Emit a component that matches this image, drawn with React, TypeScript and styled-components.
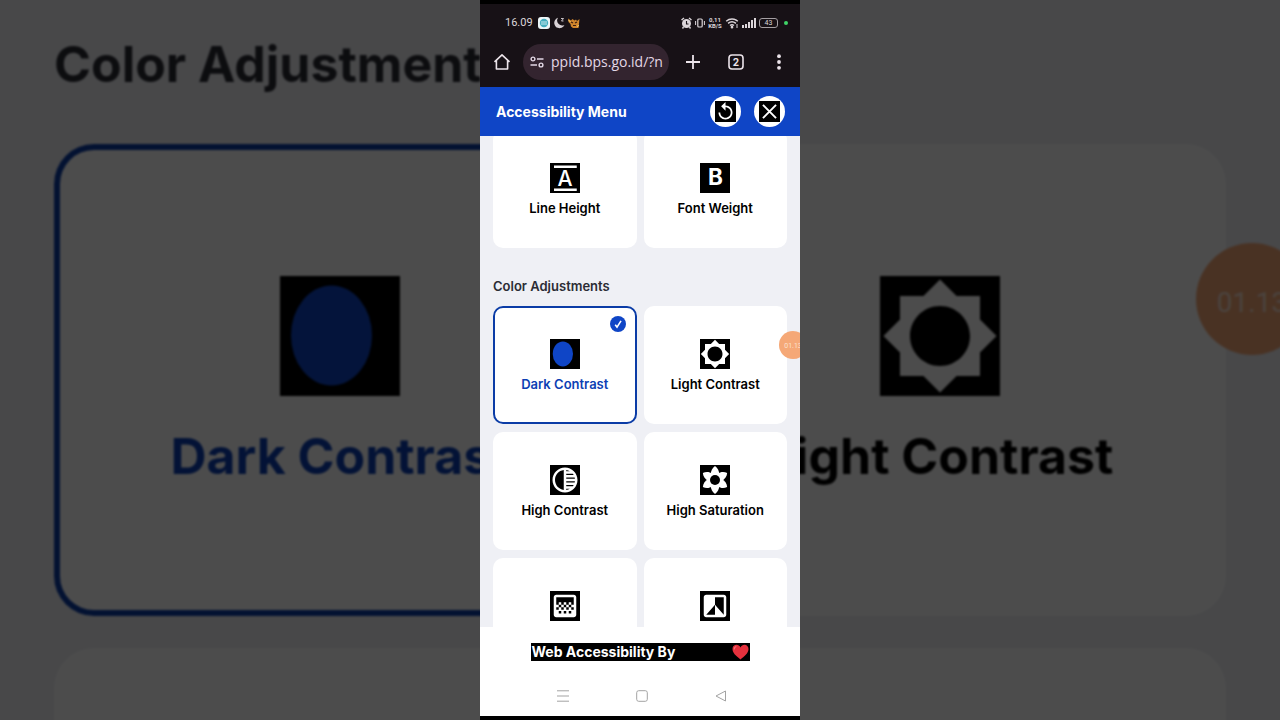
import React from "react";
import styled, { createGlobalStyle } from "styled-components";

const BLUE = "#0f45c6";

const GlobalStyle = createGlobalStyle`
  *, *::before, *::after { box-sizing: border-box; }
  body { margin: 0; background: #000; font-family: Inter, "Liberation Sans", sans-serif; }
  button, input { font: inherit; color: inherit; border: 0; padding: 0; margin: 0; background: none; }
  svg { display: block; }
`;

const Stage = styled.div`
  display: grid;
  grid-template-columns: minmax(0, 1fr);
  grid-template-rows: 100vh;
  justify-items: center;
  overflow: hidden;
`;

const Backdrop = styled.div`
  grid-area: 1 / 1;
  justify-self: stretch;
  overflow: hidden;
  background: #f0f1f5;
  opacity: 0.3;
`;

const BackdropContent = styled.div`
  position: relative;
  padding: 24px 54px 0;
  filter: blur(1px);
`;

const Phone = styled.div`
  grid-area: 1 / 1;
  width: 320px;
  height: 100%;
  display: flex;
  flex-direction: column;
  position: relative;
  overflow: hidden;
  border: solid #000;
  border-width: 4px 0;
  background: #fff;
`;

const StatusBar = styled.div`
  flex: none;
  height: 36px;
  display: flex;
  align-items: center;
  justify-content: space-between;
  padding: 2px 12px 0 25px;
  background: #171116;
  color: #dcd6da;
`;

const StatusGroup = styled.div<{ $gap: number }>`
  display: flex;
  align-items: center;
  gap: ${(p) => p.$gap}px;
`;

const Clock = styled.time`
  margin-right: 2px;
  font: 400 11px/16px Roboto, sans-serif;
`;

const NetSpeed = styled.span`
  font: 700 6px/6px Roboto, sans-serif;
  text-align: center;
  width: 14px;
`;

const BatteryBox = styled.span`
  width: 19px;
  height: 10px;
  border: 1px solid #a59fa3;
  border-radius: 3px;
  font: 400 7px/8px Roboto, sans-serif;
  text-align: center;
`;

const LiveDot = styled.span`
  width: 4px;
  height: 4px;
  border-radius: 50%;
  background: #3fd467;
  margin-left: 3px;
`;

const BrowserBar = styled.div`
  flex: none;
  height: 47px;
  display: flex;
  align-items: flex-start;
  padding-top: 4px;
  background: #171116;
  color: #ece4ea;
`;

const BarButton = styled.button`
  flex: none;
  width: 43px;
  height: 36px;
  display: grid;
  place-items: center;
`;

const AddressPill = styled.label`
  flex: 1;
  min-width: 0;
  height: 36px;
  display: flex;
  align-items: center;
  gap: 7px;
  margin-right: 2px;
  padding: 0 5px 0 7px;
  border-radius: 18px;
  background: #33242f;
`;

const AddressInput = styled.input`
  flex: 1;
  min-width: 0;
  height: 24px;
  outline: 0;
  font: 400 14px/24px "Open Sans", sans-serif;
  color: #e3d8e6;
`;

const MenuHeader = styled.header`
  flex: none;
  height: 49px;
  display: flex;
  align-items: center;
  gap: 13px;
  padding: 0 15px 0 16px;
  background: ${BLUE};
  color: #fff;
`;

const MenuTitle = styled.h1`
  flex: 1;
  margin: 0;
  font-size: 14px;
  line-height: 20px;
  font-weight: 700;
`;

const RoundButton = styled.button`
  width: 31px;
  height: 31px;
  border-radius: 50%;
  display: grid;
  place-items: center;
  background: #fff;
  svg { width: 21px; height: 21px; background: #000; color: #fff; }
`;

const MenuBody = styled.main`
  flex: 1;
  min-height: 0;
  overflow: hidden;
  padding: 0 13px;
  background: #eff0f5;
`;

const TopSection = styled.section`
  margin-top: -6px;
`;

const SectionTitle = styled.h2<{ $unit: number }>`
  margin: ${(p) => (p.$unit === 1 ? 28 : 0)}px 0 ${(p) => p.$unit * 10}px;
  font-size: ${(p) => (p.$unit === 1 ? 13 : 50)}px;
  line-height: ${(p) => p.$unit * 20}px;
  font-weight: ${(p) => (p.$unit === 1 ? 600 : 700)};
  color: #2b2c34;
`;

const TileGrid = styled.div<{ $unit: number }>`
  display: grid;
  grid-template-columns: repeat(2, minmax(0, 1fr));
  gap: ${(p) => p.$unit * 8}px ${(p) => p.$unit * 7}px;
`;

const TileBox = styled.button<{ $unit: number; $on?: boolean }>`
  position: relative;
  height: ${(p) => p.$unit * 118}px;
  display: flex;
  flex-direction: column;
  align-items: center;
  gap: ${(p) => p.$unit * 7}px;
  padding-top: ${(p) => p.$unit * 33}px;
  border-radius: ${(p) => p.$unit * 10}px;
  background: #fff;
  color: ${(p) => (p.$on ? "#0c3fb4" : "#000")};
  box-shadow: ${(p) => (p.$on ? `inset 0 0 0 ${p.$unit === 1 ? 2 : 6}px #0b3ca6` : "none")};
  svg { flex: none; width: ${(p) => p.$unit * 30}px; height: ${(p) => p.$unit * 30}px; }
`;

const TileLabel = styled.span<{ $unit: number }>`
  font-size: ${(p) => (p.$unit === 1 ? 13 : 50)}px;
  line-height: ${(p) => p.$unit * 16}px;
  font-weight: ${(p) => (p.$unit === 1 ? 600 : 700)};
  white-space: nowrap;
`;

const CheckBadge = styled.span`
  position: absolute;
  top: 10px;
  right: 11px;
  width: 16px;
  height: 16px;
  border-radius: 50%;
  display: grid;
  place-items: center;
  background: ${BLUE};
  && svg { width: 16px; height: 16px; }
`;

const TimerBubble = styled.div<{ $unit: number }>`
  position: absolute;
  top: ${(p) => (p.$unit === 1 ? 327 : 243)}px;
  right: ${(p) => p.$unit * -7}px;
  width: ${(p) => p.$unit * 28}px;
  height: ${(p) => p.$unit * 28}px;
  border-radius: 50%;
  background: #f5a877;
  color: #fbe0cf;
  font: 400 ${(p) => p.$unit * 7}px/${(p) => p.$unit * 30}px Roboto, sans-serif;
  text-align: center;
`;

const Credit = styled.footer`
  flex: none;
  height: 50px;
  display: flex;
  align-items: center;
  justify-content: center;
  background: #fff;
`;

const CreditLink = styled.a`
  width: 219px;
  height: 18px;
  display: flex;
  align-items: center;
  justify-content: space-between;
  padding: 0 1px;
  background: #000;
  color: #fff;
  text-decoration: none;
  font-size: 14px;
  line-height: 18px;
  font-weight: 700;
`;

const SystemNav = styled.nav`
  flex: none;
  height: 39px;
  display: grid;
  grid-template-columns: repeat(3, 1fr);
  padding: 0 40px 1px 43px;
  color: #a3a3a3;
  button { display: grid; place-items: center; }
`;

type IconName = "line" | "bold" | "moon" | "sun" | "tone" | "flower" | "gradient" | "bw";

const shapes: Record<IconName, React.ReactNode> = {
  line: (
    <>
      <path d="M3.200 1.900h18.200V4H3.200zM3.200 20.300h18.200v2.100H3.200z" />
      <text x="12" y="18" fontSize="17" fontWeight="500" textAnchor="middle">A</text>
    </>
  ),
  bold: <text x="12.400" y="17.800" fontSize="18" fontWeight="700" textAnchor="middle">B</text>,
  moon: <ellipse cx="10.300" cy="11.900" rx="8.100" ry="10" fill={BLUE} />,
  sun: <path d="M20 15.31L23.31 12 20 8.69V4h-4.69L12 .69 8.69 4H4v4.69L.69 12 4 15.31V20h4.69L12 23.31 15.31 20H20v-4.69zM12 18c-3.31 0-6-2.69-6-6s2.69-6 6-6 6 2.69 6 6-2.69 6-6 6z" />,
  tone: <path d="M12 2C6.48 2 2 6.48 2 12s4.48 10 10 10 10-4.48 10-10S17.52 2 12 2zm-1 17.93c-3.94-.49-7-3.85-7-7.93s3.05-7.44 7-7.93v15.86zm2-15.86c1.03.13 2 .45 2.87.93H13v-.93zM13 7h5.24c.25.31.48.65.68 1H13V7zm0 3h6.74c.08.33.15.66.19 1H13v-1zm0 9.93V19h2.87c-.87.48-1.84.8-2.87.93zM18.24 17H13v-1h5.92c-.2.35-.43.69-.68 1zm1.5-3H13v-1h6.93c-.04.34-.11.67-.19 1z" />,
  flower: (
    <>
      {[0, 60, 120, 180, 240, 300].map((a) => (
        <path key={a} transform={`rotate(${a} 12 12)`} d="M12 .8C14.200 2.300 15.500 4.800 15.300 7.800L12 12 8.700 7.800C8.500 4.800 9.800 2.300 12 .8z" />
      ))}
      <circle cx="12" cy="12" r="4" fill="#000" />
    </>
  ),
  gradient: <path d="M11 9h2v2h-2zm-2 2h2v2H9zm4 0h2v2h-2zm2-2h2v2h-2zM7 9h2v2H7zm12-6H5c-1.1 0-2 .9-2 2v14c0 1.1.9 2 2 2h14c1.1 0 2-.9 2-2V5c0-1.1-.9-2-2-2zM9 18H7v-2h2v2zm4 0h-2v-2h2v2zm4 0h-2v-2h2v2zm2-7h-2v2h2v2h-2v-2h-2v2h-2v-2h-2v2H9v-2H7v2H5v-2h2v-2H5V5h14v6z" />,
  bw: <path d="M19 3H5c-1.1 0-2 .9-2 2v14c0 1.1.9 2 2 2h14c1.1 0 2-.9 2-2V5c0-1.1-.9-2-2-2zm0 16l-7-8v8H5l7-8V5h7v14z" />,
};

function Glyph({ name }: { name: IconName }) {
  return (
    <svg viewBox="0 0 24 24" fill="#fff" aria-hidden="true">
      <rect width="24" height="24" fill="#000" />
      {shapes[name]}
    </svg>
  );
}

interface TileProps {
  icon: IconName;
  label?: string;
  name?: string;
  on?: boolean;
  unit?: number;
}

function Tile({ icon, label, name, on, unit = 1 }: TileProps) {
  const live = unit === 1;
  return (
    <TileBox
      as={live ? "button" : "div"}
      $unit={unit}
      $on={on}
      aria-label={live ? name : undefined}
      aria-pressed={live ? !!on : undefined}
    >
      <Glyph name={icon} />
      {label && <TileLabel $unit={unit}>{label}</TileLabel>}
      {on && live && (
        <CheckBadge>
          <svg viewBox="0 0 16 16" fill="none" stroke="#fff" strokeWidth="1.600">
            <path d="M5.200 8.800l1.800 2.300L11 4.900" />
          </svg>
        </CheckBadge>
      )}
    </TileBox>
  );
}

const colorTiles: TileProps[] = [
  { icon: "moon", label: "Dark Contrast", on: true },
  { icon: "sun", label: "Light Contrast" },
  { icon: "tone", label: "High Contrast" },
  { icon: "flower", label: "High Saturation" },
  { icon: "gradient", name: "Low Saturation" },
  { icon: "bw", name: "Monochrome" },
];

function ColorSection() {
  return (
    <section>
      <SectionTitle $unit={1}>Color Adjustments</SectionTitle>
      <TileGrid $unit={1}>
        {colorTiles.map((t) => (
          <Tile key={t.icon} {...t} />
        ))}
      </TileGrid>
    </section>
  );
}

/* Enlarged, dimmed view of the same section behind the phone. */
function Enlarged() {
  return (
    <Backdrop aria-hidden="true">
      <BackdropContent>
        <SectionTitle as="div" $unit={4}>Color Adjustments</SectionTitle>
        <TileGrid $unit={4}>
          {colorTiles.slice(0, 2).map((t) => (
            <Tile key={t.icon} {...t} unit={4} />
          ))}
          <TileBox as="div" $unit={4} />
          <TileBox as="div" $unit={4} />
        </TileGrid>
        <TimerBubble $unit={4}>01.13</TimerBubble>
      </BackdropContent>
    </Backdrop>
  );
}

function Status() {
  return (
    <StatusBar>
      <StatusGroup $gap={3}>
        <Clock>16.09</Clock>
        <svg width="12" height="12" viewBox="0 0 12 12">
          <rect width="12" height="12" rx="3" fill="#edf6f8" />
          <circle cx="6" cy="6" r="4.200" fill="#45aebf" />
          <path d="M3 5h6M3 7h6" stroke="#c6e7ec" strokeWidth="1" />
        </svg>
        <svg width="12" height="12" viewBox="0 0 12 12">
          <path d="M5 .8a5.300 5.300 0 1 0 6.400 7.200A5 5 0 0 1 5 .8z" fill="#d8d2d6" />
          <path d="M8 1.500h2.500l-2 2.500h2" fill="none" stroke="#d8d2d6" strokeWidth=".9" />
        </svg>
        <svg width="12" height="12" viewBox="0 0 12 12">
          <path d="M0 1.500l3 2 1.500-1.500 2 1.500 1.500-1 1 1.500 2.500-2-.5 4.500L10.500 11H5l-2-1.500L2.500 7 .5 5z" fill="#d0852b" />
          <path d="M3 5l2 1M7 6l2-1M5 8.500h3" stroke="#3a1c12" strokeWidth="1.200" />
          <path d="M.5 3l2 2M9 9.500l2-1" stroke="#f3d277" strokeWidth="1" />
        </svg>
      </StatusGroup>
      <StatusGroup $gap={3}>
        <svg width="11" height="12" viewBox="0 0 11 12">
          <circle cx="5.500" cy="6.500" r="4.500" fill="#dcd6da" />
          <path d="M.5 3L3 1M10.500 3L8 1M2.500 10L1.500 11.500M8.500 10l1 1.500" stroke="#dcd6da" strokeWidth="1.400" />
          <path d="M5.500 4v3h2" fill="none" stroke="#171116" strokeWidth="1.100" />
        </svg>
        <svg width="10" height="12" viewBox="0 0 10 12" fill="none" stroke="#dcd6da">
          <rect x="2.800" y="2" width="4.400" height="8" rx="1" strokeWidth="1.200" />
          <path d="M.6 4v4M9.400 4v4" strokeWidth="1" />
        </svg>
        <NetSpeed>0,11 KB/S</NetSpeed>
        <svg width="14" height="12" viewBox="0 0 13 12" fill="none" stroke="#dcd6da" strokeWidth="1.500">
          <path d="M.7 4.200c3.400-3 8.200-3 11.600 0M2.600 6.400c2.400-2 5.400-2 7.800 0M4.500 8.500c1.200-1 2.800-1 4 0" />
          <circle cx="6.500" cy="10.200" r=".6" />
          <path d="M11.500 7v4" strokeWidth="1" />
        </svg>
        <svg width="14" height="12" viewBox="0 0 14 12" fill="#dcd6da">
          <path d="M0 8h2v3H0zM3 7h2v4H3zM6 5h2v6H6zM9 3h2v8H9zM12 1h2v10h-2z" />
        </svg>
        <BatteryBox>43</BatteryBox>
        <LiveDot />
      </StatusGroup>
    </StatusBar>
  );
}

function Browser() {
  return (
    <BrowserBar>
      <BarButton aria-label="Home">
        <svg width="18" height="18" viewBox="0 0 18 18" fill="none" stroke="currentColor" strokeWidth="1.600" strokeLinejoin="round">
          <path d="M1.500 8.800L9 1.800l7.500 7M3.400 7.200V16h11.200V7.200" />
        </svg>
      </BarButton>
      <AddressPill>
        <svg width="14" height="12" viewBox="0 0 14 12" fill="none" stroke="#e3d8e6" strokeWidth="1.400">
          <circle cx="3" cy="3" r="1.900" />
          <path d="M7 3h6.500M.5 9H7" />
          <circle cx="11" cy="9" r="1.900" />
        </svg>
        <AddressInput aria-label="Address" defaultValue="ppid.bps.go.id/?n" />
      </AddressPill>
      <BarButton aria-label="New tab">
        <svg width="14" height="14" viewBox="0 0 14 14" stroke="currentColor" strokeWidth="1.800">
          <path d="M7 0v14M0 7h14" />
        </svg>
      </BarButton>
      <BarButton aria-label="Open tabs">
        <svg width="16" height="16" viewBox="0 0 16 16">
          <rect x="1" y="1" width="14" height="14" rx="3" fill="none" stroke="currentColor" strokeWidth="1.600" />
          <text x="8" y="11.500" fontSize="10" fontWeight="700" textAnchor="middle" fill="currentColor">2</text>
        </svg>
      </BarButton>
      <BarButton aria-label="More">
        <svg width="4" height="16" viewBox="0 0 4 16" fill="currentColor">
          <circle cx="2" cy="2.200" r="1.900" />
          <circle cx="2" cy="8" r="1.900" />
          <circle cx="2" cy="13.800" r="1.900" />
        </svg>
      </BarButton>
    </BrowserBar>
  );
}

export default function App() {
  return (
    <>
      <GlobalStyle />
      <Stage>
        <Enlarged />
        <Phone>
          <Status />
          <Browser />
          <MenuHeader>
            <MenuTitle>Accessibility Menu</MenuTitle>
            <RoundButton aria-label="Reset">
              <svg viewBox="0 0 24 24" fill="currentColor">
                <path d="M12 5V1L7 6l5 5V7c3.310 0 6 2.690 6 6s-2.690 6-6 6-6-2.690-6-6H4c0 4.420 3.580 8 8 8s8-3.580 8-8-3.580-8-8-8z" />
              </svg>
            </RoundButton>
            <RoundButton aria-label="Close">
              <svg viewBox="0 0 24 24" stroke="currentColor" strokeWidth="2.200">
                <path d="M4.500 4.500l15 15M19.500 4.500l-15 15" />
              </svg>
            </RoundButton>
          </MenuHeader>
          <MenuBody>
            <TopSection>
              <TileGrid $unit={1}>
                <Tile icon="line" label="Line Height" />
                <Tile icon="bold" label="Font Weight" />
              </TileGrid>
            </TopSection>
            <ColorSection />
          </MenuBody>
          <Credit>
            <CreditLink href="#credit">
              Web Accessibility By
              <svg width="17" height="16" viewBox="0 0 17 16">
                <path d="M8.500 15.500C5 12.500.5 9.500.5 5 .5 2.500 2.300.8 4.500.8c1.700 0 3.200 1 4 2.600.8-1.600 2.300-2.600 4-2.600 2.200 0 4 1.700 4 4.200 0 4.500-4.500 7.500-8 10.500z" fill="#e5313d" />
                <path d="M2.300 5c0-1.200.6-2 1.600-2.300" fill="none" stroke="#f4737b" strokeWidth="1.200" strokeLinecap="round" />
              </svg>
            </CreditLink>
          </Credit>
          <SystemNav>
            <button aria-label="Recent apps">
              <svg width="12" height="12" viewBox="0 0 12 12" stroke="currentColor">
                <path d="M0 .8h12M0 6h12M0 11.200h12" />
              </svg>
            </button>
            <button aria-label="Home screen">
              <svg width="12" height="12" viewBox="0 0 12 12" fill="none" stroke="currentColor">
                <rect x=".7" y=".7" width="10.600" height="10.600" rx="2" />
              </svg>
            </button>
            <button aria-label="Back">
              <svg width="12" height="12" viewBox="0 0 12 12" fill="none" stroke="currentColor" strokeLinejoin="round">
                <path d="M1 6l9.500-5v10z" />
              </svg>
            </button>
          </SystemNav>
          <TimerBubble $unit={1}>01.13</TimerBubble>
        </Phone>
      </Stage>
    </>
  );
}
